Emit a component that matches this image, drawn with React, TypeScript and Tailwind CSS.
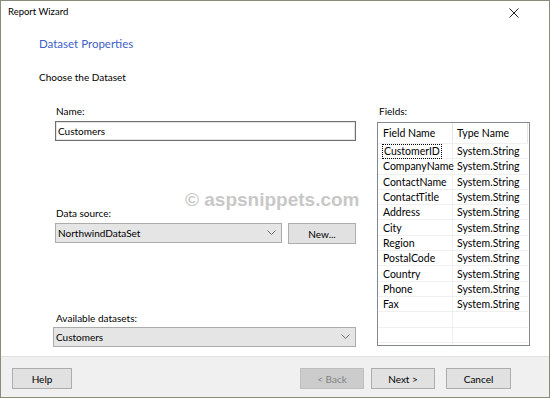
const fields = [
  "CustomerID",
  "CompanyName",
  "ContactName",
  "ContactTitle",
  "Address",
  "City",
  "Region",
  "PostalCode",
  "Country",
  "Phone",
  "Fax",
];

function Chevron() {
  return (
    <svg width="9" height="6" viewBox="0 0 9 6" className="shrink-0">
      <path d="M0.5 0.5 L4.5 4.5 L8.5 0.5" fill="none" stroke="#707070" strokeWidth="1" />
    </svg>
  );
}

function Dropdown({ value, className }: { value: string; className?: string }) {
  return (
    <div
      className={`flex h-[20px] items-center justify-between border border-[#acacac] bg-[#e5e5e5] pl-[2px] pr-[5px] ${className ?? ""}`}
    >
      <span>{value}</span>
      <Chevron />
    </div>
  );
}

function WinButton({
  label,
  width,
  disabled = false,
}: {
  label: string;
  width: string;
  disabled?: boolean;
}) {
  return (
    <button
      type="button"
      className={`flex h-[21px] items-center justify-center border ${width} ${
        disabled
          ? "border-[#bfbfbf] bg-[#cccccc] text-[#838383]"
          : "border-[#adadad] bg-[#e1e1e1] text-black"
      }`}
    >
      {label}
    </button>
  );
}

export default function App() {
  return (
    <div className="relative flex h-[398px] w-[550px] flex-col border border-[#8b8b7a] bg-white font-[Lato,sans-serif] text-[10px] leading-[16px] text-black">
      {/* title bar */}
      <div className="flex h-[22px] items-center justify-between pl-[7px] pr-[30px]">
        <span className="text-[9.5px]">Report Wizard</span>
        <svg width="10" height="10" viewBox="0 0 10 10" className="mt-[2px]">
          <path d="M0.5 0.5 L9.5 9.5 M9.5 0.5 L0.5 9.5" stroke="#222" strokeWidth="1" />
        </svg>
      </div>

      <div className="flex flex-1 flex-col">
        <div className="ml-[38px] mt-[11px] text-[11.5px] leading-[20px] text-[#3c5fc8]">
          Dataset Properties
        </div>
        <div className="ml-[38px] mt-[15px]">Choose the Dataset</div>

        <div className="mt-[18px] flex">
          {/* left column */}
          <div className="ml-[54px] flex w-[301px] flex-col">
            <span className="ml-[1px]">Name:</span>
            <div className="mt-[2px] flex h-[20px] items-center border border-[#6f6f6f] pl-[2px] shadow-[inset_0_0_0_1px_#e3e3e3]">
              Customers
            </div>

            <span className="ml-[1px] mt-[64px]">Data source:</span>
            <div className="mt-[2px] flex gap-[6px]">
              <Dropdown value="NorthwindDataSet" className="w-[227px]" />
              <WinButton label="New..." width="w-[68px]" />
            </div>

            <span className="ml-[1px] mt-[66px]">Available datasets:</span>
            <Dropdown value="Customers" className="-ml-[2px] mt-[1px] w-[303px]" />
          </div>

          {/* right column */}
          <div className="ml-[21px] flex w-[153px] flex-col">
            <span className="ml-[2px]">Fields:</span>
            <div className="mt-[3px] flex h-[224px] flex-col overflow-hidden border border-[#828790] pr-[1px] text-[10.5px]">
              <div className="flex h-[21px] shrink-0 items-center border-b border-[#f0f0f0]">
                <div className="flex h-full w-[75px] items-center border-r border-[#e5e5e5] pl-[5px]">
                  Field Name
                </div>
                <div className="flex h-full w-[75px] items-center border-r border-[#e5e5e5] pl-[4px]">
                  Type Name
                </div>
              </div>
              {fields.concat(["", "", ""]).map((f, i) => (
                <div
                  key={i}
                  className="flex h-[15.3px] shrink-0 items-center border-b border-[#f0f0f0]"
                >
                  <div className="flex h-full w-[75px] items-center border-r border-[#f0f0f0] pl-[4px]">
                    {i === 0 ? (
                      <span className="border border-dotted border-black px-[1px] leading-[13px]">
                        {f}
                      </span>
                    ) : (
                      <span className="pl-[1px]">{f}</span>
                    )}
                  </div>
                  <div className="flex h-full w-[75px] items-center pl-[4px]">
                    {f ? "System.String" : ""}
                  </div>
                </div>
              ))}
            </div>
          </div>
        </div>
      </div>

      {/* footer */}
      <div className="flex h-[41px] items-start border-t border-[#dfdfdf] bg-[#f0f0f0] pt-[11px]">
        <div className="ml-[11px]">
          <WinButton label="Help" width="w-[60px]" />
        </div>
        <div className="ml-auto mr-[38px] flex">
          <WinButton label="< Back" width="w-[64px]" disabled />
          <div className="ml-[7px]">
            <WinButton label="Next >" width="w-[64px]" />
          </div>
          <div className="ml-[11px]">
            <WinButton label="Cancel" width="w-[65px]" />
          </div>
        </div>
      </div>

      {/* watermark */}
      <div className="pointer-events-none absolute left-[184px] top-[188px] font-['Liberation_Sans',Arial,sans-serif] text-[19px] font-bold leading-[22px] text-[#c8c8c8]">
        © aspsnippets.com
      </div>
    </div>
  );
}
